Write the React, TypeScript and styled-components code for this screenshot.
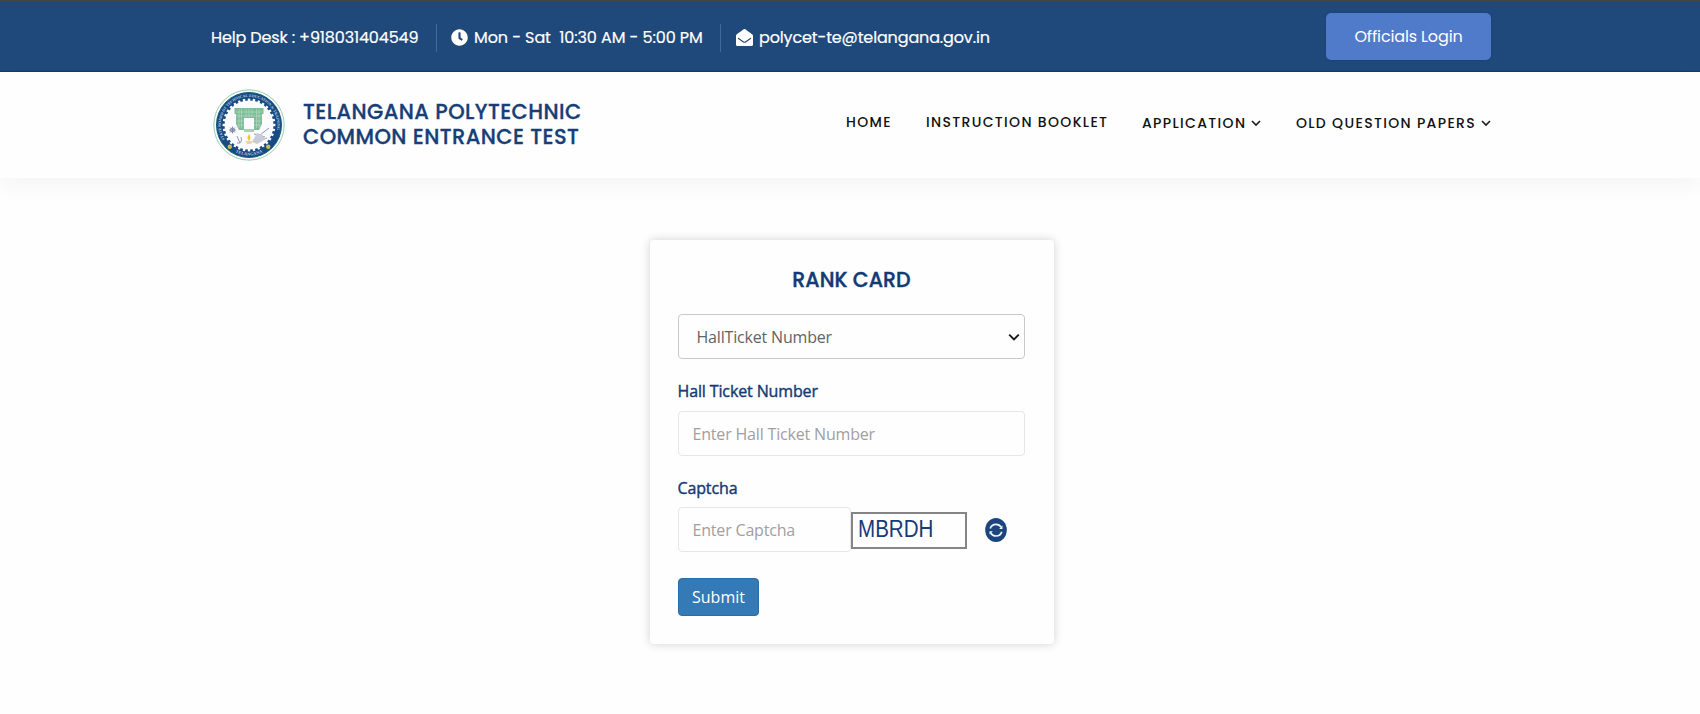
import React from "react";
import styled, { createGlobalStyle } from "styled-components";
import { FaClock, FaEnvelopeOpen } from "react-icons/fa";

const GlobalStyle = createGlobalStyle`
  *, *::before, *::after { box-sizing: border-box; }
  html, body { margin: 0; padding: 0; background: #fefefe; overflow: hidden; }
  body { font-family: "Open Sans", sans-serif; font-size: 16px; }
`;

const Page = styled.div`
  height: 714px;
  display: flex;
  flex-direction: column;
  align-items: stretch;
`;

const TopBar = styled.div`
  height: 72px;
  flex: none;
  display: flex;
  justify-content: space-between;
  align-items: flex-start;
  padding: 0 209px 0 211px;
  background: #1f497b;
  border-top: 2px solid #454545;
  border-bottom: 1px solid #133a6d;
  font-family: Poppins, Inter, sans-serif;
  color: #fff;
`;

const ContactList = styled.div`
  display: flex;
  align-items: center;
  padding-top: 22px;
`;

const ContactItem = styled.div<{ $width: number; $spacing: number }>`
  width: ${(p) => p.$width}px;
  height: 28px;
  display: flex;
  align-items: center;
  gap: 6px;
  padding-bottom: 2px;
  white-space: pre;
  font-size: 16px;
  letter-spacing: ${(p) => p.$spacing}px;
  -webkit-text-stroke: 0.2px #fff;
  svg { flex: none; width: 17px; height: 17px; }
  & + & {
    border-left: 1px solid #44689a;
    padding-left: 14px;
  }
  & + & + & { padding-left: 15px; }
`;

const LoginButton = styled.button`
  width: 165px;
  height: 47px;
  margin-top: 11px;
  padding: 0 0 1px;
  border: 0;
  border-radius: 5px;
  background: #507bcb;
  color: #fff;
  font: 400 16px Poppins, Inter, sans-serif;
  letter-spacing: -0.14px;
  box-shadow: 0 0 2px #153d72;
`;

const Header = styled.header`
  height: 106px;
  flex: none;
  display: flex;
  justify-content: space-between;
  padding: 0 209px 0 213px;
  background: #fefefe;
  box-shadow: 0 10px 20px rgba(0, 0, 0, 0.035);
`;

const Brand = styled.div`
  display: flex;
  align-items: flex-start;
  gap: 18px;
  padding-top: 17px;
`;

const BrandName = styled.div`
  padding-top: 10px;
  font: 500 21px/25px Poppins, Inter, sans-serif;
  letter-spacing: 0.42px;
  white-space: nowrap;
  color: #173e77;
  -webkit-text-stroke: 0.3px #173e77;
`;

const Nav = styled.nav`
  display: flex;
  padding-top: 40px;
`;

const NavItem = styled.a<{ $width: number; $drop?: boolean }>`
  width: ${(p) => p.$width}px;
  height: 20px;
  margin-top: ${(p) => (p.$drop ? 1 : 0)}px;
  display: flex;
  align-items: center;
  justify-content: space-between;
  & + & { margin-left: 35px; }
  font: 500 14px/20px Poppins, Inter, sans-serif;
  letter-spacing: 1.34px;
  white-space: nowrap;
  color: #111;
  svg { margin-bottom: 1px; }
`;

const Main = styled.main`
  display: flex;
  justify-content: center;
  padding: 62px 0 0 3px;
`;

const Card = styled.form`
  width: 404px;
  height: 404px;
  display: flex;
  flex-direction: column;
  align-items: flex-start;
  padding: 26px 28px 0;
  border-radius: 4px;
  background: #fefefe;
  box-shadow: 0 0 10px rgba(0, 0, 0, 0.18);
`;

const CardTitle = styled.h1`
  align-self: center;
  margin: 0 0 21px;
  font: 500 20.5px/27px Poppins, Inter, sans-serif;
  letter-spacing: 0.05px;
  color: #123a73;
  -webkit-text-stroke: 0.4px #123a73;
`;

const SelectBox = styled.div`
  width: 347px;
  height: 45px;
  display: flex;
  align-items: center;
  justify-content: space-between;
  padding: 0 4px 0 18px;
  border: 1px solid #c9c9cb;
  border-radius: 4px;
  color: #636363;
  font-size: 16px;
  letter-spacing: -0.18px;
`;

const Label = styled.label`
  height: 24px;
  margin: 20px 0 8px;
  line-height: 24px;
  font-size: 16px;
  letter-spacing: -0.13px;
  color: #133a73;
  -webkit-text-stroke: 0.4px #133a73;
`;

const Input = styled.input<{ $width: number }>`
  width: ${(p) => p.$width}px;
  height: 45px;
  padding: 0 14px;
  border: 1px solid #e6e6e8;
  border-radius: 4px;
  background: transparent;
  font: 400 16px "Open Sans", sans-serif;
  letter-spacing: -0.18px;
  outline: 0;
  &::placeholder { color: #a0a0a0; opacity: 1; }
`;

const CaptchaRow = styled.div`
  display: flex;
  align-items: center;
  margin-top: -1px;
`;

const CaptchaBox = styled.div`
  width: 116px;
  height: 37px;
  margin-top: 2px;
  padding-left: 5px;
  border: 2px solid #858585;
  font: 400 23.5px/30px "Liberation Sans", Arial, sans-serif;
  color: #173b75;
  span { display: inline-block; transform: scaleX(0.875); transform-origin: left; }
`;

const RefreshButton = styled.button`
  display: flex;
  margin: 0 0 0 18px;
  padding: 0;
  border: 0;
  background: none;
`;

const SubmitButton = styled.button`
  width: 81px;
  height: 38px;
  margin-top: 26px;
  padding: 0 0 0 1px;
  border: 1px solid #286da6;
  border-radius: 4px;
  background: #337ab7;
  color: #fff;
  font: 400 16px "Open Sans", sans-serif;
`;

const Chevron = ({ size }: { size: number }) => (
  <svg width={size} height={size} viewBox="0 0 10 10" fill="none" stroke="#1b1b1b" strokeWidth="1.6">
    <path d="M1 3 L5 7 L9 3" />
  </svg>
);

const teeth = Array.from({ length: 32 }, (_, i) => i * 11.25);

const Seal = () => (
  <svg width="72" height="72" viewBox="-36 -36 72 72">
    <circle r="35.2" fill="#f4fbf6" stroke="#9fcdb5" strokeWidth="1" />
    <circle r="32.5" fill="#174a83" stroke="#1a5a7e" strokeWidth="1" />
    <circle r="24.5" fill="#fbfbfd" />
    {teeth.map((a) => (
      <rect key={a} x="-1.2" y="-26.4" width="2.4" height="4" fill="#fbfbfd" transform={`rotate(${a})`} />
    ))}
    <defs>
      <path id="sealTop" d="M-23.3 16 A28.2 28.2 0 1 1 23.3 16" />
      <path id="sealBottom" d="M-17 25.3 A30.5 30.5 0 0 0 17 25.3" />
    </defs>
    <g fill="#b9cee2" fontFamily="Liberation Serif, serif" fontSize="3.9" fontWeight="700">
      <text>
        <textPath href="#sealTop" startOffset="2">STATE BOARD OF TECHNICAL EDUCATION &amp; TRAINING</textPath>
      </text>
      <text textAnchor="middle" fontSize="4.4">
        <textPath href="#sealBottom" startOffset="50%">TELANGANA</textPath>
      </text>
    </g>
    <circle cx="-19.2" cy="21.7" r="2.2" fill="#d5b944" />
    <circle cx="19.2" cy="21.7" r="2.2" fill="#d5b944" />
    <g fill="#7fbd98">
      <path d="M-14.5 -17 H14.5 V-11 H13 V-1 L10 5 H5 V-7 H-5 V5 H-10 L-13 -1 V-11 H-14.5 Z" />
      <path d="M-5 4 H5 V7 H-5 Z" fill="#a5d3b6" />
    </g>
    <g stroke="#c4e3cf" strokeWidth="0.5" fill="none">
      <path d="M-13 -13 H13 M-13 -9 H13 M-12 -4 H-5 M5 -4 H12 M-12 0 H-5 M5 0 H12 M-10 -16 V3 M-7.5 -16 V3 M7.5 -16 V3 M10 -16 V3 M-3 -16 V-8 M0 -16 V-8 M3 -16 V-8" />
    </g>
    <g stroke="#777e9c" strokeWidth="0.8" fill="none">
      <path d="M-20 5 H-13 M-16.5 1.5 V8.5 M-19 2.5 L-14 7.5 M-19 7.5 L-14 2.5" />
      <circle cx="-16.5" cy="5" r="2" />
      <path d="M-12 11 L-9 18 M-12 18 Q-6 19 -8 12 M5 9 L16 12 M7 15 Q12 8 20 3 M10 16 L18 13" />
    </g>
    <path d="M8 8 Q14 10 17 14 L8 19 L3 17 Z" fill="#c9cbd9" />
    <path d="M0 9 Q3 13 0 16 Q-3 13 0 9 Z" fill="#edc541" />
    <path d="M-4 16 H4 L2 19 H-2 Z" fill="#e5d9a3" />
  </svg>
);

const RefreshIcon = () => (
  <svg width="22" height="24" viewBox="0 0 22 24" fill="none">
    <ellipse cx="11" cy="12" rx="10.8" ry="12" fill="#1b457c" />
    <g stroke="#eef3f9" strokeWidth="1.7">
      <path d="M5.2 10.5 Q6.5 6.3 11 6.3 Q14.5 6.3 16.3 9.3" />
      <path d="M16.8 13.7 Q15.5 18 11 18 Q7.5 18 5.7 15" />
    </g>
    <path d="M17.5 7.6 V11 H14.1 Z M4.5 16.6 V13.2 H7.9 Z" fill="#eef3f9" />
  </svg>
);

export default function App() {
  return (
    <Page>
      <GlobalStyle />
      <TopBar>
        <ContactList>
          <ContactItem $width={225} $spacing={-0.14}>Help Desk : +918031404549</ContactItem>
          <ContactItem $width={284} $spacing={-0.09}>
            <FaClock />
            <span>Mon - Sat  10:30 AM - 5:00 PM</span>
          </ContactItem>
          <ContactItem $width={272} $spacing={-0.14}>
            <FaEnvelopeOpen />
            <span>polycet-te@telangana.gov.in</span>
          </ContactItem>
        </ContactList>
        <LoginButton>Officials Login</LoginButton>
      </TopBar>
      <Header>
        <Brand>
          <Seal />
          <BrandName>
            TELANGANA POLYTECHNIC
            <br />
            COMMON ENTRANCE TEST
          </BrandName>
        </Brand>
        <Nav>
          <NavItem $width={45}>HOME</NavItem>
          <NavItem $width={181}>INSTRUCTION BOOKLET</NavItem>
          <NavItem $width={119} $drop>
            APPLICATION <Chevron size={10} />
          </NavItem>
          <NavItem $width={195} $drop>
            OLD QUESTION PAPERS <Chevron size={10} />
          </NavItem>
        </Nav>
      </Header>
      <Main>
        <Card onSubmit={(e) => e.preventDefault()}>
          <CardTitle>RANK CARD</CardTitle>
          <SelectBox>
            HallTicket Number <Chevron size={12} />
          </SelectBox>
          <Label htmlFor="ticket">Hall Ticket Number</Label>
          <Input id="ticket" $width={347} placeholder="Enter Hall Ticket Number" />
          <Label htmlFor="captcha">Captcha</Label>
          <CaptchaRow>
            <Input id="captcha" $width={173} placeholder="Enter Captcha" />
            <CaptchaBox><span>MBRDH</span></CaptchaBox>
            <RefreshButton type="button" aria-label="Refresh captcha"><RefreshIcon /></RefreshButton>
          </CaptchaRow>
          <SubmitButton type="submit">Submit</SubmitButton>
        </Card>
      </Main>
    </Page>
  );
}
